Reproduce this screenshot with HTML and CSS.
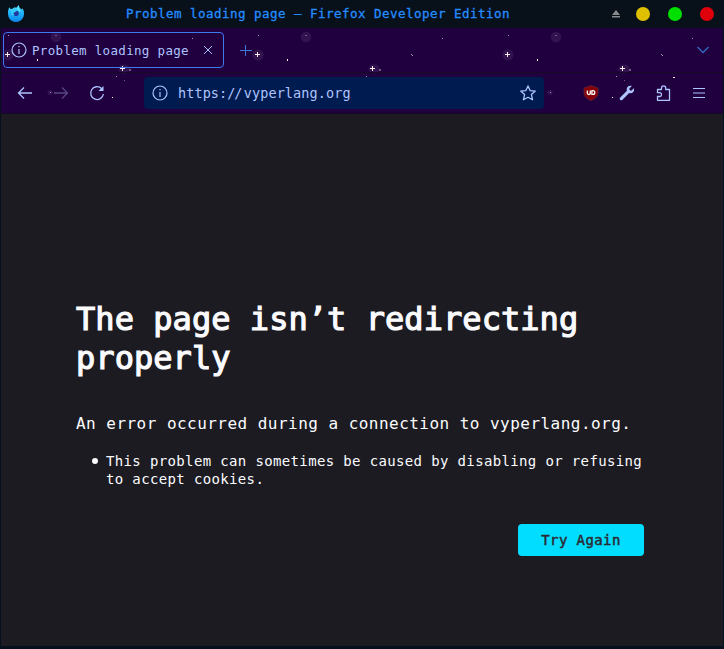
FILE: index.html
```html
<!DOCTYPE html>
<html lang="en">
<head>
<meta charset="utf-8">
<title>Problem loading page</title>
<link rel="stylesheet" href="styles.css">
</head>
<body>
<div class="window">
  <header class="titlebar">
    <svg class="logo" width="18" height="18" viewBox="0 0 18 18">
      <defs><linearGradient id="fx" x1="0" y1="0" x2="0" y2="1"><stop offset="0" stop-color="#55e4ff"/><stop offset=".45" stop-color="#1fb4fb"/><stop offset="1" stop-color="#0a86ea"/></linearGradient></defs>
      <path fill="url(#fx)" d="M2.400 2.200 3.500 4l2-.3L7 2.600 9.800 2.500 11.500 0 12.800 3 14.900 4.500 15.200 3.300C16.700 5 17.200 7.200 17 9.200A8 8 0 0 1 1 9C.8 6.700 1.300 4 2.400 2.200Z"/>
      <path d="M6 6.500 11 6 12 8.500 10.500 11 7.500 11 5.500 9Z" fill="#223a9f"/>
      <path fill="#35ccff" d="M3.500 4 7.500 4.800 9 6.500 6.300 8 7.500 10.500 4.500 10Z"/>
      <path fill="#5be6ff" d="M11.500.8C11 3.200 13.500 4.500 13 7L11.500 5.800 9.800 3.500Z"/>
    </svg>
    <div class="caption">Problem loading page — Firefox Developer Edition</div>
    <div class="controls">
      <svg width="10" height="10" viewBox="0 0 10 10" fill="#89898b"><path d="M5 1 9 6H1ZM1 7h8v1.500H1z"/></svg>
      <i class="light yellow"></i><i class="light green"></i><i class="light red"></i>
    </div>
  </header>
  <div class="chrome">
    <svg class="stars" width="722" height="86">
      <defs><pattern id="sky" x="-1" width="250" height="86" patternUnits="userSpaceOnUse">
        <g fill="#321350"><circle cx="8" cy="27" r="5.500"/><circle cx="56" cy="9" r="5.200"/><ellipse cx="124" cy="41" rx="5.500" ry="4.500"/><circle cx="50" cy="64.500" r="2.500"/></g>
        <g fill="#fff0f2"><path d="M5 26h5v1H5zM7 24h1v5H7zM120 40h5v1h-5zM122 38h1v5h-1zM37 31h1v2h-1zM173 49h2v1h-2zM112 69h1v1h-1z"/></g>
        <g fill="#a792ae"><path d="M192 10h1v1h-1zM161 26h1v1h-1zM162 27h1v1h-1zM116 48h1v1h-1zM8 7h1v1H8zM50 64h1v1h-1z"/></g>
        <g fill="#765a83"><path d="M55 7h2v1h-2zM129 41h2v2h-2zM204 44h1v1h-1zM124 52h1v1h-1z"/></g>
      </pattern></defs>
      <rect width="722" height="86" fill="url(#sky)"/>
    </svg>
    <div class="tabs">
      <div class="tab">
        <svg width="16" height="16" viewBox="0 0 16 16" fill="none" stroke="currentColor" stroke-width="1.200"><circle cx="8" cy="8" r="7"/><path d="M8 7v5M8 4v1.300"/></svg>
        <span class="tab-title">Problem loading page</span>
        <svg width="10" height="10" viewBox="0 0 10 10" fill="none" stroke="currentColor" stroke-width="1"><path d="m1 1 8 8M9 1 1 9"/></svg>
      </div>
      <svg class="plus" width="12" height="12" viewBox="0 0 12 12" stroke="currentColor"><path d="M0 6.500h12M5.500 1v11"/></svg>
      <svg class="chevron" width="12" height="8" viewBox="0 0 12 8" fill="none" stroke="currentColor" stroke-width="1.300"><path d="m.5 1 5.500 5.500L11.500 1"/></svg>
    </div>
    <div class="navbar">
      <svg class="back" width="16" height="16" viewBox="0 0 16 16" fill="none" stroke="currentColor" stroke-width="1.300"><path d="M15 8H1.500M7 2.500 1.500 8 7 13.500"/></svg>
      <svg class="forward" width="16" height="16" viewBox="0 0 16 16" fill="none" stroke="currentColor" stroke-width="1.300"><path d="M1 8h13.500M9 2.500 14.500 8 9 13.500"/></svg>
      <svg class="reload" width="16" height="16" viewBox="0 0 16 16" fill="none" stroke="currentColor" stroke-width="1.300"><path d="M12.500 3.500A6.400 6.400 0 1 0 14.400 9"/><path d="M14.500 1v5h-5Z" fill="currentColor" stroke="none"/></svg>
      <div class="urlbar">
        <svg width="16" height="16" viewBox="0 0 16 16" fill="none" stroke="currentColor" stroke-width="1.200"><circle cx="8" cy="8" r="7"/><path d="M8 7v5M8 4v1.300"/></svg>
        <span class="url">https:<span class="slashes">//</span>vyperlang.org</span>
        <svg width="16" height="16" viewBox="0 0 16 16" fill="none" stroke="currentColor" stroke-width="1.300" stroke-linejoin="round"><path d="m8 .9 2.100 4.700 5.200.5-3.900 3.500 1.200 5.200L8 12.200l-4.600 2.600 1.200-5.200L.7 6.100l5.200-.5Z"/></svg>
      </div>
      <div class="tools">
        <svg width="16" height="16" viewBox="0 0 16 16"><path fill="#850009" stroke="#65313e" stroke-width=".6" d="M8 .5 15 3v5c0 3.700-3.300 6-7 7.500C4.300 14 1 11.700 1 8V3Z"/><path d="M4.300 5.500v2.500q0 1.500 1.500 1.500t1.500-1.500V5.500M8.900 5.500v3.900H10q1.800 0 1.800-1.900T10 5.600H8.500" fill="none" stroke="#fff" stroke-width="1.300"/></svg>
        <svg width="16" height="16" viewBox="0 0 16 16"><path fill="#aec4ff" d="M14.800 3.200 12 5.900 10 4l2.800-3C9.500.1 7 2.600 7.900 5.800L1.200 12.500c-1.500 1.700.6 3.800 2.300 2.300l6.700-6.700c3.100 1 5.700-1.600 4.600-4.900Z"/></svg>
        <svg width="16" height="16" viewBox="0 0 16 16" fill="none" stroke="#aec4ff" stroke-width="1.300" stroke-linejoin="round"><path d="M2.500 15.300h12V4.500h-3.800V3Q10.700.8 8.600.8T6.500 3v1.500h-4v3.200h2q2 0 2 1.900t-2 1.900h-2Z"/></svg>
        <svg width="14" height="16" viewBox="0 0 14 16" stroke="#aec4ff" stroke-width="1.200"><path d="M1 3.500h12M1 8h12M1 12.500h12"/></svg>
      </div>
    </div>
  </div>
  <main class="page">
    <h1>The page isn’t redirecting properly</h1>
    <p>An error occurred during a connection to vyperlang.org.</p>
    <ul><li>This problem can sometimes be caused by disabling or refusing to accept cookies.</li></ul>
    <button>Try Again</button>
  </main>
</div>
</body>
</html>
```
FILE: styles.css
```css
* { box-sizing: border-box; }
body { margin: 0; background: #06101c; font-family: "DejaVu Sans Mono", "Liberation Mono", monospace; }
svg { display: block; flex: none; }
.window { width: 724px; height: 649px; border: 1px solid #07111e; border-bottom-width: 3px; display: flex; flex-direction: column; }
.titlebar { height: 27px; display: flex; align-items: center; padding: 0 9px 2px 6px; background: #08111a; }
.logo { margin-top: 1px; }
.caption { width: 390px; margin-left: 101px; font-size: 12.500px; letter-spacing: .475px; line-height: 25px; color: #258cff; white-space: pre; -webkit-text-stroke: .3px; }
.controls { display: flex; align-items: center; margin-left: auto; }
.light { width: 14px; height: 14px; border-radius: 50%; margin-left: 18px; }
.controls svg + .light { margin-left: 15px; }
.yellow { background: #dfc000; }
.green { background: #00df00; }
.red { background: #df000b; }
.chrome { height: 86px; position: relative; background: #20003f; color: #aec4ff; border-bottom: 1px solid #110c1d; }
.stars { position: absolute; inset: 0; }
.tabs { position: relative; height: 45px; display: flex; align-items: center; padding: 0 14px 0 2px; border-bottom: 1px solid #180927; }
.tab { width: 221px; height: 36px; border: 1px solid #3d79ef; border-radius: 4px; display: flex; align-items: center; padding: 0 10px 0 7px; }
.tab-title { width: 173px; margin-left: 5px; font-size: 12.500px; letter-spacing: .32px; white-space: nowrap; }
.plus { margin-left: 16px; color: #3c76db; }
.chevron { margin-left: auto; color: #3768c5; }
.navbar { position: relative; height: 40px; display: flex; align-items: center; padding-left: 16px; }
.forward { margin-left: 20px; color: #594584; }
.reload { margin-left: 20px; }
.urlbar { width: 400px; height: 32px; margin-left: 39px; border-radius: 4px; background: #001b50; display: flex; align-items: center; padding: 0 8px; }
.url { flex: 1; margin-left: 10px; font-size: 13.500px; letter-spacing: .09px; }
.slashes { letter-spacing: -1.200px; margin-right: 2.600px; }
.tools { display: flex; align-items: center; gap: 20px; margin-left: 39px; }
.tools svg:last-child { margin-left: 1px; }
.page { flex: 1; background: #1c1b22; color: #fbfbfe; padding: 186px 77px 0 75px; }
h1 { width: 569px; margin: 0; font-size: 32px; line-height: 39px; font-weight: 400; letter-spacing: .05px; -webkit-text-stroke: 1.200px; }
p { width: 569px; margin: 35px 0 0; font-size: 16px; line-height: 22px; letter-spacing: .465px; white-space: nowrap; }
ul { width: 569px; margin: 17px 0 0; padding-left: 30px; font-size: 14px; line-height: 18px; letter-spacing: .36px; list-style: none; }
li::before { content: ""; float: left; width: 6px; height: 6px; margin: 6px 0 0 -14px; border-radius: 50%; background: #fbfbfe; }
button { display: block; width: 126px; height: 32px; margin: 36px 2px 0 auto; padding: 0; border: 0; border-radius: 4px; background: #00ddff; color: #2b2a33; font: 14px "DejaVu Sans Mono", monospace; letter-spacing: .4px; -webkit-text-stroke: .5px; }
```
